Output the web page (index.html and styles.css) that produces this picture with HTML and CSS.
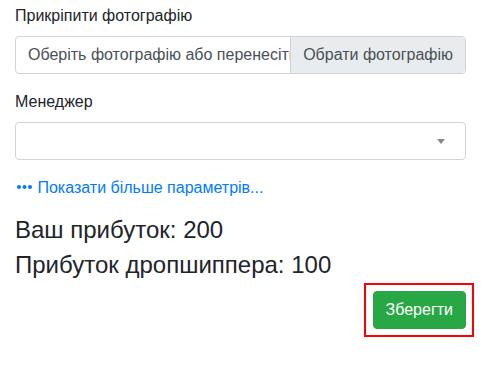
FILE: index.html
```html
<!DOCTYPE html>
<html lang="uk">
<head>
    <meta charset="UTF-8">
    <meta name="viewport" content="width=device-width, initial-scale=1.0">
    <title>Замовлення</title>
    <link rel="stylesheet" href="styles.css">
</head>
<body>
    <div class="order-form">
        <div class="form-group">
            <label class="form-label">Прикріпити фотографію</label>
            <div class="file-input">
                <span class="file-name">Оберіть фотографію або перенесіть її сюди</span>
                <span class="file-button">Обрати фотографію</span>
            </div>
        </div>

        <div class="form-group">
            <label class="form-label">Менеджер</label>
            <div class="select-box">
                <span class="select-value"></span>
                <span class="select-arrow"></span>
            </div>
        </div>

        <a href="#" class="more-link">
            <svg class="dots" width="16" height="16" viewBox="0 0 16 16">
                <circle cx="3" cy="8" r="2" fill="#007bff"/>
                <circle cx="8.5" cy="8" r="2" fill="#007bff"/>
                <circle cx="14" cy="8" r="2" fill="#007bff"/>
            </svg>
            Показати більше параметрів...
        </a>

        <h4 class="profit">Ваш прибуток: 200</h4>
        <h4 class="profit">Прибуток дропшиппера: 100</h4>

        <div class="actions">
            <div class="save-frame">
                <button class="btn-save">Зберегти</button>
            </div>
        </div>
    </div>
</body>
</html>
```

FILE: styles.css
```css
html, body {
    margin: 0;
    padding: 0;
    background: #fff;
}

body {
    font-family: 'Liberation Sans', Arial, sans-serif;
    font-size: 16px;
    line-height: 1.5;
    color: #212529;
}

.order-form {
    padding: 4px 15px 0 15px;
}

.form-group {
    margin-bottom: 16px;
}

.form-label {
    display: block;
    margin-bottom: 8px;
}

.file-input {
    display: flex;
    height: 38px;
    box-sizing: border-box;
    border: 1px solid #ced4da;
    border-radius: 4px;
    overflow: hidden;
    color: #495057;
}

.file-name {
    flex: 1;
    min-width: 0;
    padding: 6px 0 6px 12px;
    white-space: nowrap;
    overflow: hidden;
    text-overflow: clip;
}

.file-button {
    padding: 6px 12px;
    background-color: #e9ecef;
    border-left: 1px solid #ced4da;
    white-space: nowrap;
}

.select-box {
    display: flex;
    align-items: center;
    justify-content: space-between;
    height: 38px;
    box-sizing: border-box;
    border: 1px solid #ced4da;
    border-radius: 4px;
    padding: 0 20px 0 12px;
}

.select-arrow {
    width: 0;
    height: 0;
    border-style: solid;
    border-width: 5px 4px 0 4px;
    border-color: #888 transparent transparent transparent;
}

.more-link {
    display: block;
    margin-bottom: 16px;
    color: #007bff;
    text-decoration: none;
}

.more-link .dots {
    vertical-align: -2px;
    margin-left: 1px;
    margin-right: 1px;
}

.profit {
    margin: 0 0 6px 0;
    font-size: 24px;
    font-weight: 400;
    line-height: 1.2;
}

.actions {
    display: flex;
    justify-content: flex-end;
}

.save-frame {
    margin: -3px -8px 0 0;
    padding: 6px 6px 6px 7px;
    border: 2px solid #f00;
}

.btn-save {
    display: block;
    font-family: inherit;
    font-size: 16px;
    line-height: 1.5;
    padding: 6px 12px;
    color: #fff;
    background-color: #28a745;
    border: 1px solid #28a745;
    border-radius: 4px;
    cursor: pointer;
}
```
